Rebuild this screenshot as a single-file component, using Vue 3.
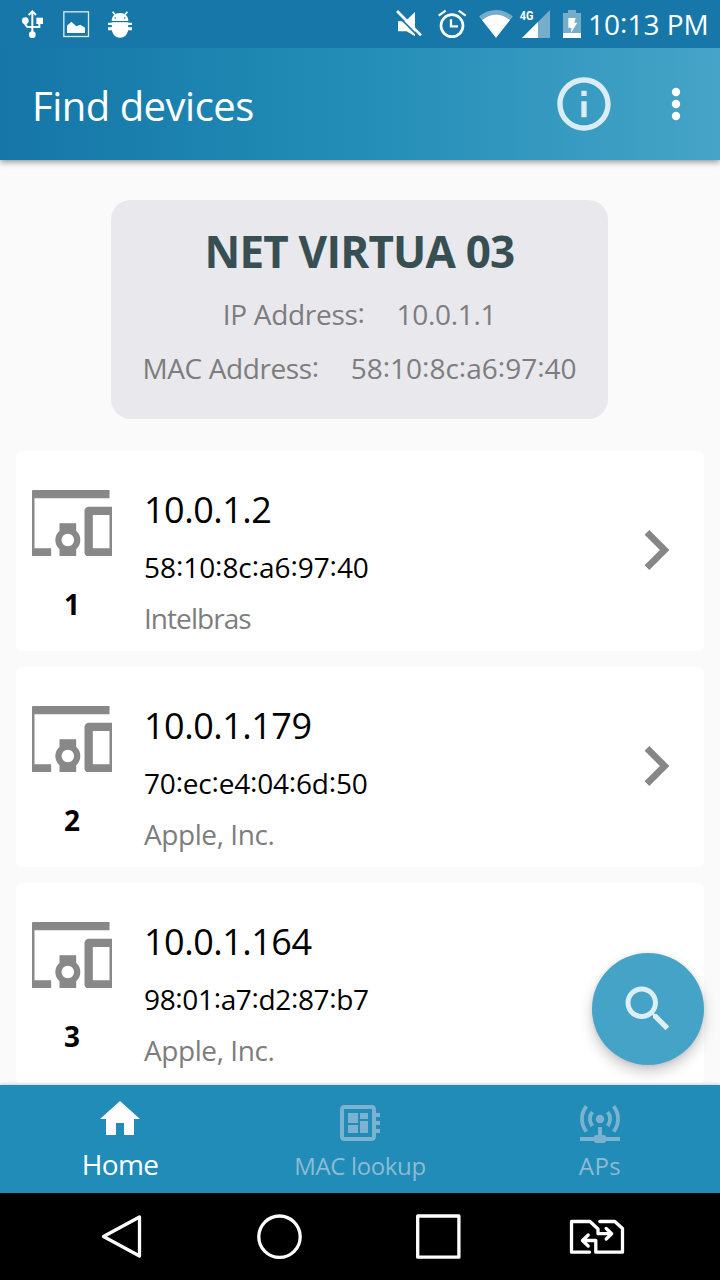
<script setup>
import { h } from 'vue'

const network = { name: 'NET VIRTUA 03', ip: '10.0.1.1', mac: '58:10:8c:a6:97:40' }

const devices = [
  { id: 1, ip: '10.0.1.2', mac: '58:10:8c:a6:97:40', vendor: 'Intelbras', tight: true, tracking: -0.07 },
  { id: 2, ip: '10.0.1.179', mac: '70:ec:e4:04:6d:50', vendor: 'Apple, Inc.', tracking: -0.2 },
  { id: 3, ip: '10.0.1.164', mac: '98:01:a7:d2:87:b7', vendor: 'Apple, Inc.', tracking: -0.36 },
]

// Text whose colons sit slightly above the baseline
const Raised = (props) =>
  h('span', props.text.split(/(:)/).map((part) => (part === ':' ? h('span', { class: 'colon' }, ':') : part)))
Raised.props = ['text']
</script>

<template>
  <div class="screen">
    <header class="status">
      <svg class="status-left" width="140" height="48" viewBox="0 0 420 144">
        <g fill="none" stroke="#fff" stroke-width="6">
          <path d="M97 38V100M76 64V73L82 81H118V66M86 45L97 34L108 45" />
        </g>
        <g fill="#fff">
          <circle cx="76" cy="62" r="10" /><circle cx="97" cy="104" r="10" />
          <path d="M109 53h20v19h-20z" />
          <path d="M201 99V77L214 65L229 79L241 74L255 83V99z" />
          <path d="M335 63c0-14 9-24 25-24s25 10 25 24z" />
          <path d="M335 67h50v16c0 18-10 30-25 30s-25-12-25-30z" />
          <path d="M324 68h72v7h-72zM324 82h72v9h-72z" />
        </g>
        <rect x="191.5" y="35.500" width="74" height="74" fill="none" stroke="#dcebf2" stroke-width="4" />
        <path d="M338 35L345 44M382 35L375 44" stroke="#fff" stroke-width="5" />
        <circle cx="346" cy="54" r="2.500" fill="#1677a8" /><circle cx="374" cy="54" r="2.500" fill="#1677a8" />
        <path d="M324 78.500h11M385 78.500h11" stroke="#1677a8" stroke-width="5" />
      </svg>
      <svg class="status-right" width="210" height="48" viewBox="0 0 630 144">
        <path fill="#fff" d="M54 64H76L105 36V109L80 94H54z" />
        <path d="M48 42L116 110" stroke="#1677a8" stroke-width="5" />
        <path d="M51 33L123 106" stroke="#fff" stroke-width="8" />
        <circle cx="216" cy="77" r="33" fill="none" stroke="#fff" stroke-width="8" />
        <path d="M213 58V79H234M176 47L197 32M236 32L257 47" fill="none" stroke="#fff" stroke-width="7" />
        <path fill="#76adca" d="M348 113L297 49Q348 11 399 49z" />
        <path fill="#fff" d="M348 113L306 60Q348 28 390 60z" />
        <path fill="#76adca" d="M426 114L510 30V114z" />
        <path fill="#fff" d="M426 114L474 66V114z" />
        <text x="419" y="60" textLength="41" lengthAdjust="spacingAndGlyphs" class="cell">4G</text>
        <path fill="#76adca" d="M549 39H564V30H588V39H603V114H549z" />
        <path fill="#fff" d="M549 99H603V114H549zM565 54H587L583 68H592L572 100L575 83H565z" />
      </svg>
      <span class="clock"><Raised text="10:13 PM" /></span>
    </header>

    <div class="toolbar">
      <h1>Find devices</h1>
      <svg class="info" width="64" height="64" viewBox="0 0 24 24" fill="#fff" fill-opacity=".82">
        <path d="M11 17h2v-6h-2v6zm1-15C6.480 2 2 6.480 2 12s4.480 10 10 10 10-4.480 10-10S17.520 2 12 2zm0 18c-4.410 0-8-3.590-8-8s3.590-8 8-8 8 3.590 8 8-3.590 8-8 8zM11 9h2V7h-2v2z" />
      </svg>
      <svg class="more" width="48" height="48" viewBox="0 0 48 48" fill="#fff">
        <circle cx="24" cy="12" r="4.200" /><circle cx="24" cy="24" r="4.200" /><circle cx="24" cy="36" r="4.200" />
      </svg>
    </div>

    <main class="content">
      <section class="network">
        <h2>{{ network.name }}</h2>
        <div class="row"><Raised class="ip-label" text="IP Address:" /><span class="ip-value">{{ network.ip }}</span></div>
        <div class="row"><Raised class="mac-label" text="MAC Address:" /><Raised :text="network.mac" /></div>
      </section>

      <article v-for="d in devices" :key="d.id" class="device">
        <div class="thumb">
          <svg width="80" height="66.670" viewBox="2.400 4 19.200 16" fill="#888">
            <path d="M3 6h18V4H3c-1.100 0-2 .9-2 2v12c0 1.100.9 2 2 2h4v-2H3V6zm10 6H9v1.780c-.61.55-1 1.330-1 2.220s.39 1.670 1 2.220V20h4v-1.780c.61-.55 1-1.340 1-2.220s-.39-1.670-1-2.220V12zm-2 5.500c-.83 0-1.500-.67-1.500-1.500s.67-1.500 1.500-1.500 1.500.67 1.500 1.500-.67 1.500-1.500 1.500zM22 8h-6c-.5 0-1 .5-1 1v10c0 .5.5 1 1 1h6c.5 0 1-.5 1-1V9c0-.5-.5-1-1-1zm-1 10h-4v-8h4v8z" />
          </svg>
          <b>{{ d.id }}</b>
        </div>
        <div class="details">
          <div class="ip">{{ d.ip }}</div>
          <div class="mac" :style="{ letterSpacing: d.tracking + 'px' }"><Raised :text="d.mac" /></div>
          <div class="vendor" :class="{ tight: d.tight }">{{ d.vendor }}</div>
        </div>
        <svg class="chevron" width="80" height="80" viewBox="0 0 24 24" fill="#868686">
          <path d="M10 6L8.590 7.410 13.170 12l-4.580 4.590L10 18l6-6z" />
        </svg>
      </article>

      <button class="fab" aria-label="Search">
        <svg width="60" height="60" viewBox="0 0 24 24" fill="#fff" fill-opacity=".82">
          <path d="M15.500 14h-.79l-.28-.27C15.410 12.590 16 11.110 16 9.500 16 5.910 13.090 3 9.500 3S3 5.910 3 9.500 5.910 16 9.500 16c1.610 0 3.090-.59 4.230-1.570l.27.28v.79l5 4.990L20.490 19l-4.990-5zm-6 0C7.010 14 5 11.990 5 9.500S7.010 5 9.500 5 14 7.010 14 9.500 11.990 14 9.500 14z" />
        </svg>
      </button>
    </main>

    <nav class="tabs">
      <div class="tab active">
        <svg width="48" height="48" viewBox="0 0 24 24" fill="#fff"><path d="M10 20v-6h4v6h5v-8h3L12 3 2 12h3v8z" /></svg>
        <span>Home</span>
      </div>
      <div class="tab">
        <svg width="48" height="48" viewBox="0 0 24 24" fill="#7cb2cf">
          <path d="M22 9V7h-2V5c0-1.100-.9-2-2-2H4c-1.100 0-2 .9-2 2v14c0 1.100.9 2 2 2h14c1.100 0 2-.9 2-2v-2h2v-2h-2v-2h2v-2h-2V9h2zm-4 10H4V5h14v14zM6 13h5v4H6zm6-6h4v3h-4zM6 7h5v5H6zm6 4h4v6h-4z" />
        </svg>
        <span>MAC lookup</span>
      </div>
      <div class="tab">
        <svg width="48" height="48" viewBox="0 0 48 48" fill="#7cb2cf">
          <circle cx="24" cy="20" r="4.200" />
          <g fill="none" stroke="#7cb2cf" stroke-width="3.800">
            <path d="M10.500 7.200A20 20 0 0 0 10.500 32.600M37.500 7.200A20 20 0 0 1 37.500 32.600" />
            <path d="M16.400 13A11 11 0 0 0 16.400 27M31.600 13A11 11 0 0 1 31.600 27" />
          </g>
          <path d="M22 28h4v8h-4zM4 38h40v4H4z" />
          <rect x="17.700" y="36" width="12.600" height="8" rx="3" />
        </svg>
        <span class="aps">APs</span>
      </div>
    </nav>

    <footer class="system">
      <svg width="60" height="60" viewBox="0 0 60 60"><path d="M48.500 10V49L12.500 29.500z" /></svg>
      <svg width="60" height="60" viewBox="0 0 60 60"><circle cx="29.500" cy="29.700" r="20.700" /></svg>
      <svg width="60" height="60" viewBox="0 0 60 60"><path d="M9.700 9h41.200v41.200h-41.200z" /></svg>
      <svg width="60" height="60" viewBox="0 0 60 60">
        <path d="M22.500 45.200H4.500V14.500H23L31 22V26.700H44.500M39.200 21.500L44.700 26.700L39.200 32" />
        <path d="M32.800 14.500H47.800L55.500 21.500V45.200H28.800V33.500H15.500M21.200 28L15.500 33.500L21.200 39" />
      </svg>
    </footer>
  </div>
</template>

<style>
body { margin: 0; }
.colon { position: relative; top: -0.07em; }
</style>

<style scoped>
.screen {
  width: 720px;
  height: 1280px;
  overflow: hidden;
  display: flex;
  flex-direction: column;
  background: #fafafa;
  font-family: "Open Sans", "Noto Sans", sans-serif;
  font-size: 28px;
  color: #000;
}
svg { display: block; flex: none; }
.status {
  flex: none;
  height: 48px;
  display: flex;
  background: #1677a8;
  color: #fff;
  position: relative;
  z-index: 3;
}
.status-right { margin-left: 240px; }
.cell { font: bold 36px Roboto, sans-serif; fill: #fff; }
.clock { margin-left: -2px; line-height: 48px; white-space: nowrap; }
.toolbar {
  flex: none;
  height: 112px;
  display: flex;
  align-items: center;
  padding: 0 20px 0 32px;
  background: linear-gradient(90deg, #1576a7, #238db7 50%, #46a4c7);
  box-shadow: 0 2px 6px rgba(0, 0, 0, .42);
  position: relative;
  z-index: 2;
}
h1 {
  margin: 0;
  flex: 1;
  font-size: 40px;
  font-weight: 400;
  line-height: 110px;
  padding-top: 4px;
  letter-spacing: -.5px;
  color: #fff;
}
.info { margin-right: 36px; }
.content {
  flex: none;
  box-sizing: border-box;
  height: 925px;
  padding: 40px 16px 0;
  overflow: hidden;
  position: relative;
}
.network {
  box-sizing: border-box;
  width: 497px;
  height: 219px;
  margin: 0 auto 32px 95px;
  border-radius: 20px;
  background: #e8e8ed;
  color: #7d7d7d;
  text-align: center;
}
h2 {
  margin: 0 0 6px;
  padding-top: 21px;
  font-size: 44px;
  line-height: 60px;
  letter-spacing: -.8px;
  color: #374f53;
}
.row {
  display: flex;
  justify-content: center;
  gap: 32px;
  line-height: 54px;
  white-space: nowrap;
}
.ip-label, .ip-value { letter-spacing: -.3px; }
.mac-label { letter-spacing: -.4px; }
.device {
  height: 200px;
  margin-bottom: 16px;
  border-radius: 6px;
  background: #fff;
  display: flex;
  align-items: center;
  padding: 0 8px 0 16px;
}
.thumb {
  width: 80px;
  height: 200px;
  box-sizing: border-box;
  padding-top: 38.700px;
}
.thumb b {
  display: block;
  margin-top: 23px;
  line-height: 50px;
  text-align: center;
}
.chevron { margin-bottom: 2px; }
.details { flex: 1; height: 200px; padding-left: 32px; }
.ip { margin-top: 33px; font-size: 36px; line-height: 52px; letter-spacing: -.5px; }
.mac { margin-top: 6px; line-height: 50px; }
.vendor { margin-top: 1px; line-height: 50px; letter-spacing: -.42px; color: #7d7d7d; }
.vendor.tight { letter-spacing: -.95px; }
.fab {
  position: absolute;
  right: 16px;
  bottom: 20px;
  width: 112px;
  height: 112px;
  border: 0;
  padding: 0;
  border-radius: 50%;
  display: grid;
  place-items: center;
  background: #44a3c7;
  box-shadow: 0 7px 14px rgba(0, 0, 0, .2), 0 1px 5px rgba(0, 0, 0, .1);
}
.tabs {
  flex: none;
  height: 108px;
  display: flex;
  background: #208cb7;
  box-shadow: 0 -1px 3px rgba(0, 0, 0, .16);
  position: relative;
}
.tab {
  flex: 1;
  display: flex;
  flex-direction: column;
  align-items: center;
  padding-top: 14px;
  font-size: 24px;
  line-height: 38px;
  letter-spacing: -.35px;
  color: #8cbbd4;
}
.tab.active { padding-top: 10px; font-size: 28px; line-height: 42px; letter-spacing: -.7px; color: #fff; }
.aps { letter-spacing: .4px; }
.system {
  flex: 1;
  display: flex;
  align-items: center;
  justify-content: space-around;
  padding: 0 43.500px 0 41.500px;
  background: #000;
}
.system path, .system circle {
  fill: none;
  stroke: #fff;
  stroke-width: 3.300;
  stroke-linejoin: round;
  stroke-linecap: round;
}
</style>
